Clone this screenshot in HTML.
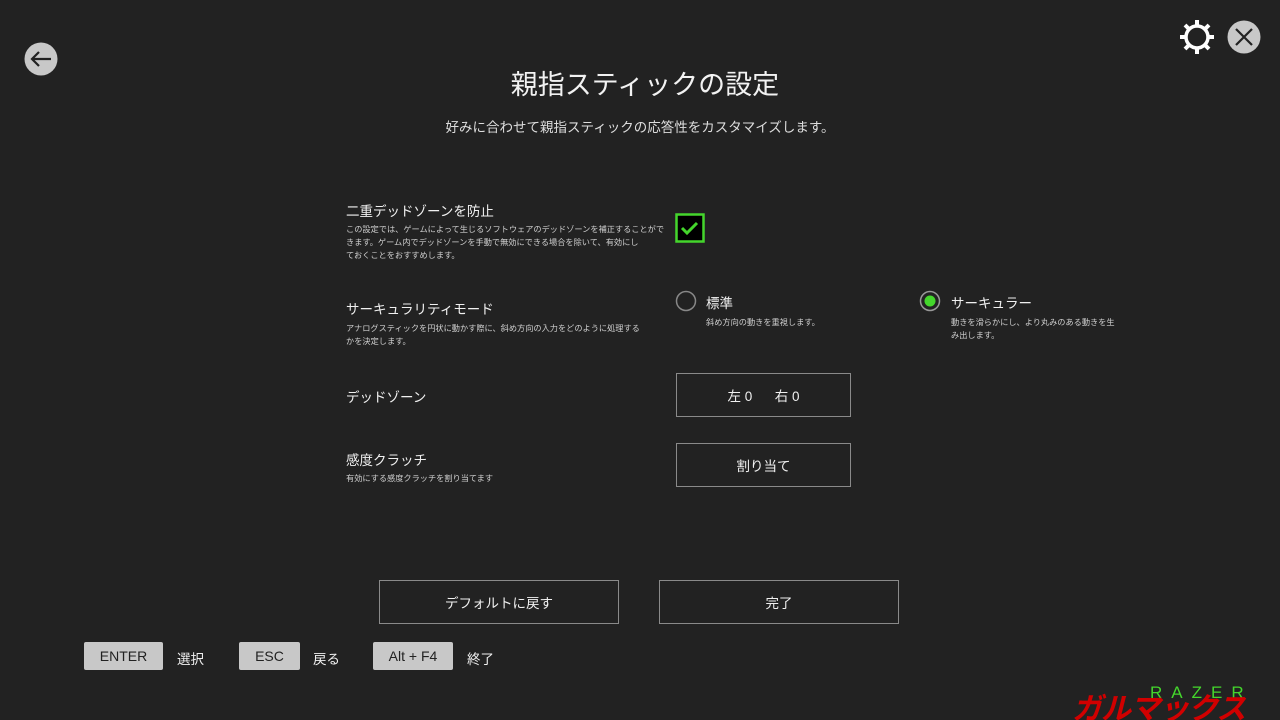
<!DOCTYPE html>
<html><head><meta charset="utf-8"><style>
html,body{margin:0;width:1280px;height:720px;overflow:hidden}
body{background:#222222;color:#eee;font-family:"Liberation Sans","Noto Sans CJK JP",sans-serif;position:relative}
.a{position:absolute;white-space:nowrap}
.lbl{font-size:13.5px;color:#f0f0f0}
.sm{font-size:8.2px;color:#cfcfcf;line-height:13px}
.box{position:absolute;border:1px solid #8a8a8a;box-sizing:border-box;display:flex;align-items:center;justify-content:center;font-size:13.5px;color:#f0f0f0}
.key{position:absolute;background:#c8c8c8;color:#222;font-size:14px;display:flex;align-items:center;justify-content:center;height:28px;top:642px;border-radius:2px}
</style></head><body>
<svg class="a" style="left:24px;top:42px" width="36" height="36"><circle cx="17" cy="17" r="16.5" fill="#c8c8c8"/><path d="M27 17H8M15 10l-7 7 7 7" stroke="#222" stroke-width="2.2" fill="none"/></svg>
<svg class="a" style="left:1178px;top:18px" width="38" height="38" viewBox="0 0 38 38"><g stroke="#fff" stroke-width="4"><line x1="19" y1="2" x2="19" y2="36"/><line x1="2" y1="19" x2="36" y2="19"/><line x1="7" y1="7" x2="31" y2="31"/><line x1="31" y1="7" x2="7" y2="31"/></g><circle cx="19" cy="19" r="11" fill="#222" stroke="#fff" stroke-width="3.5"/></svg>
<svg class="a" style="left:1227px;top:20px" width="34" height="34"><circle cx="17" cy="17" r="16.5" fill="#c8c8c8"/><path d="M9 9l16 16M25 9L9 25" stroke="#222" stroke-width="2.2"/></svg>
<div class="a" style="left:0;width:1290px;text-align:center;top:63px;font-size:27px;color:#f2f2f2">親指スティックの設定</div>
<div class="a" style="left:0;width:1280px;text-align:center;top:116px;font-size:13.5px;color:#ddd">好みに合わせて親指スティックの応答性をカスタマイズします。</div>

<div class="a lbl" style="left:346px;top:200px">二重デッドゾーンを防止</div>
<div class="a sm" style="left:346px;top:223px">この設定では、ゲームによって生じるソフトウェアのデッドゾーンを補正することがで<br>きます。ゲーム内でデッドゾーンを手動で無効にできる場合を除いて、有効にし<br>ておくことをおすすめします。</div>
<svg class="a" style="left:675px;top:213px" width="30" height="30"><rect x="1.5" y="1.5" width="27" height="27" fill="#000" stroke="#44d62c" stroke-width="2.5"/><path d="M7 15l5 5 10-10" stroke="#44d62c" stroke-width="3" fill="none"/></svg>

<div class="a lbl" style="left:346px;top:298px">サーキュラリティモード</div>
<div class="a sm" style="left:346px;top:322px">アナログスティックを円状に動かす際に、斜め方向の入力をどのように処理する<br>かを決定します。</div>
<svg class="a" style="left:675px;top:290px" width="22" height="22"><circle cx="11" cy="11" r="9.5" fill="none" stroke="#888" stroke-width="1.5"/></svg>
<div class="a lbl" style="left:706px;top:292px">標準</div>
<div class="a sm" style="left:706px;top:316px">斜め方向の動きを重視します。</div>
<svg class="a" style="left:919px;top:290px" width="22" height="22"><circle cx="11" cy="11" r="9.5" fill="none" stroke="#999" stroke-width="1.5"/><circle cx="11" cy="11" r="5.5" fill="#44d62c"/></svg>
<div class="a lbl" style="left:951px;top:292px">サーキュラー</div>
<div class="a sm" style="left:951px;top:316px">動きを滑らかにし、より丸みのある動きを生<br>み出します。</div>

<div class="a lbl" style="left:346px;top:386px">デッドゾーン</div>
<div class="box" style="left:676px;top:373px;width:175px;height:44px">左 0&nbsp;&nbsp;&nbsp;&nbsp;&nbsp;&nbsp;右 0</div>

<div class="a lbl" style="left:346px;top:449px">感度クラッチ</div>
<div class="a sm" style="left:346px;top:472px">有効にする感度クラッチを割り当てます</div>
<div class="box" style="left:676px;top:443px;width:175px;height:44px">割り当て</div>

<div class="box" style="left:379px;top:580px;width:240px;height:44px">デフォルトに戻す</div>
<div class="box" style="left:659px;top:580px;width:240px;height:44px">完了</div>

<div class="key" style="left:84px;width:79px">ENTER</div>
<div class="a lbl" style="left:177px;top:648px">選択</div>
<div class="key" style="left:239px;width:61px">ESC</div>
<div class="a lbl" style="left:313px;top:648px">戻る</div>
<div class="key" style="left:373px;width:80px">Alt + F4</div>
<div class="a lbl" style="left:467px;top:648px">終了</div>

<div class="a" style="left:1150px;top:683px;font-size:17px;color:#44d62c;letter-spacing:9px">RAZER</div>
<div class="a" style="left:1072px;top:684px;font-size:30px;font-weight:bold;font-style:italic;color:#d10000;letter-spacing:-1px">ガルマックス</div>
</body></html>
